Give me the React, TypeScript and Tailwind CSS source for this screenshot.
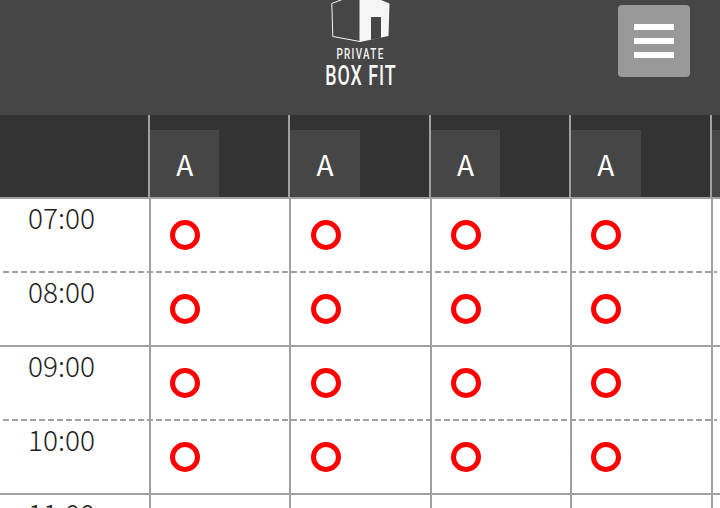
import React from 'react';

const times = ['07:00', '08:00', '09:00', '10:00', '11:00'];
const columns = [0, 1, 2, 3];

const Logo = () => (
  <svg width="60" height="43" viewBox="0 0 60 43" className="block">
    <path d="M0.8 3.5 L12.5 -1 H29 V41.5 L1.8 36.5 Z" fill="none" stroke="#f5f5f5" strokeWidth="1" />
    <path
      fillRule="evenodd"
      d="M29 -1 H47.5 L58.5 3.5 L57.5 36 L29 42 Z M40 17 V39.5 L50 37.5 V17 Z"
      fill="#f5f5f5"
    />
  </svg>
);

const App = () => {
  return (
    <div className="w-[720px] h-[508px] overflow-hidden bg-white font-['Noto_Sans_CJK_JP','Noto_Sans',sans-serif]">
      {/* top bar */}
      <header className="h-[115px] bg-[#464646] flex justify-between relative">
        <div className="w-[60px] ml-[331px] flex flex-col items-center">
          <Logo />
          <div className="mt-[4px] mr-[1px] h-[14px] leading-[14px] text-[15px] font-medium tracking-[2px] text-[#f5f5f5] font-['Roboto',sans-serif] scale-x-[0.66] whitespace-nowrap">
            PRIVATE
          </div>
          <div className="mt-[2px] mr-[1px] h-[26px] leading-[26px] text-[28px] font-medium tracking-[1.5px] text-[#f8f8f8] font-['Roboto',sans-serif] scale-x-[0.64] whitespace-nowrap">
            BOX FIT
          </div>
        </div>
        <button className="w-[72px] h-[72px] mt-[5px] mr-[30px] rounded-[4px] bg-[#999999] flex flex-col items-center justify-center gap-[8px]">
          <span className="block w-[40px] h-[6px] bg-white" />
          <span className="block w-[40px] h-[6px] bg-white" />
          <span className="block w-[40px] h-[6px] bg-white" />
        </button>
      </header>

      {/* column heads */}
      <div className="flex h-[84px] bg-[#333333] border-b-2 border-[#a0a0a0]">
        <div className="w-[148px] shrink-0" />
        {columns.map((c) => (
          <div key={c} className="w-[140.4px] shrink-0 border-l-2 border-[#a0a0a0] pt-[15px]">
            <div className="w-[69.4px] h-[67px] bg-[#464646] text-white text-[28px] font-normal flex items-center justify-center">
              A
            </div>
          </div>
        ))}
        <div className="flex-1 border-l-2 border-[#a0a0a0] pt-[15px]">
          <div className="h-[67px] bg-[#464646]" />
        </div>
      </div>

      {/* time rows */}
      {times.map((time, i) => (
        <div key={time} className="relative flex h-[74px]">
          <div className="w-[149px] shrink-0 pl-[28px] text-[28px] leading-[36px] font-light text-[#222222]">
            {time}
          </div>
          {columns.map((c) => (
            <div key={c} className="w-[140.4px] shrink-0 border-l-2 border-[#a0a0a0] pl-[19.2px] pt-[21px]">
              {i < 4 && <div className="w-[30px] h-[30px] rounded-full border-[5px] border-[#ff0000]" />}
            </div>
          ))}
          <div className="flex-1 border-l-2 border-[#a0a0a0]" />
          {i < 4 && (
            <div
              className={
                i % 2 === 0
                  ? 'absolute left-[3px] right-[3px] bottom-0 h-[2px] bg-[repeating-linear-gradient(90deg,#a0a0a0_0,#a0a0a0_6px,transparent_6px,transparent_9px)]'
                  : 'absolute left-0 right-0 bottom-0 h-[2px] bg-[#a0a0a0]'
              }
            />
          )}
        </div>
      ))}
    </div>
  );
};

export default App;
